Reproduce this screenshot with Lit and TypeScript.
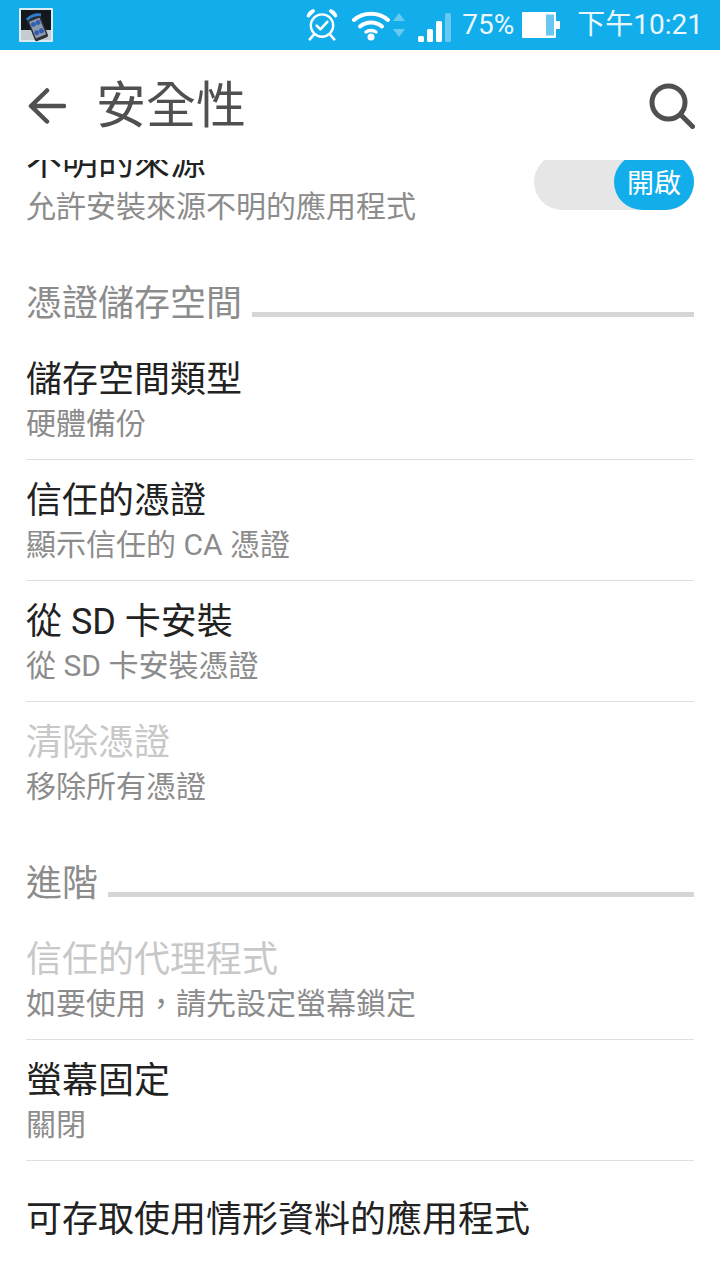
import { LitElement, html, css } from "lit";
import { customElement } from "lit/decorators.js";

type Row = { t: string; s?: string; dim?: boolean; last?: boolean };

@customElement("app-root")
export class AppRoot extends LitElement {
  static styles = css`
    :host {
      display: block;
      width: 720px;
      height: 1280px;
      overflow: hidden;
      background: #fff;
      font-family: Roboto, "Noto Sans CJK TC", sans-serif;
    }
    .status {
      height: 50px;
      background: #12aeeb;
      display: flex;
      align-items: center;
      color: #fff;
      padding: 0 17px 0 19px;
      box-sizing: border-box;
    }
    .status svg { display: block; flex: none; }
    .spacer { flex: 1; }
    .pct { font-size: 28px; margin: 0 8px 0 11px; line-height: 50px; color: #eaf8fe; }
    .time { font-size: 28px; margin-left: 17px; line-height: 50px; color: #eaf8fe; }
    .wifi { margin-left: 14px; }
    .arrows { margin-left: 3px; }
    .signal { margin-left: 13px; margin-top: 6px; }
    .bar {
      height: 110px;
      display: flex;
      align-items: center;
      padding: 0 25px 0 28px;
    }
    .bar svg { display: block; flex: none; margin-top: 2px; }
    .bar h1 {
      flex: 1;
      margin: 2px 0 0 30px;
      font-size: 50px;
      font-weight: 400;
      line-height: 60px;
      color: #505050;
    }
    .viewport { height: 1120px; overflow: hidden; padding: 0 26px; }
    .scroll { margin-top: -38px; }
    .row {
      padding: 18px 0 14px;
      border-bottom: 1px solid #e0e0e0;
      display: flex;
      align-items: flex-start;
    }
    .row.last { border-bottom: 0; padding-bottom: 15px; }
    .row.single { padding-top: 36px; }
    .body { flex: 1; }
    .t { font-size: 36px; line-height: 46px; color: #222; }
    .t.dim { color: #c8c8c8; }
    .s { font-size: 30px; line-height: 42px; color: #8c8c8c; }
    .section {
      display: flex;
      padding-top: 38px;
      padding-bottom: 12px;
      font-size: 36px;
      line-height: 46px;
      color: #8c8c8c;
      gap: 10px;
    }
    .rule { flex: 1; height: 5px; margin-top: 31px; background: #d6d6d6; }
    .toggle {
      width: 160px;
      height: 56px;
      margin-top: 14px;
      border-radius: 28px;
      background: #e6e6e6;
      display: flex;
      justify-content: flex-end;
    }
    .knob {
      width: 80px;
      height: 56px;
      border-radius: 28px;
      background: #12aeeb;
      color: #fff;
      font-size: 27px;
      line-height: 60px;
      text-align: center;
    }
  `;

  row(r: Row) {
    return html`<div class="row ${r.last ? "last" : ""} ${r.s ? "" : "single"}">
      <div class="body">
        <div class="t ${r.dim ? "dim" : ""}">${r.t}</div>
        ${r.s ? html`<div class="s">${r.s}</div>` : ""}
      </div>
    </div>`;
  }

  section(t: string) {
    return html`<div class="section"><span>${t}</span><div class="rule"></div></div>`;
  }

  appIcon() {
    return html`<svg width="34" height="34" viewBox="0 0 34 34">
      <rect width="34" height="34" rx="1" fill="#dcecf4"/>
      <rect x="2" y="2" width="30" height="20" fill="#14171c"/>
      <rect x="2" y="22" width="30" height="10" fill="#c4ccd2"/>
      <path d="M8 12C11 8 17 6 22 7" stroke="#2f7fd0" stroke-width="3" fill="none"/>
      <g transform="translate(-2 0) rotate(-22 21 21)">
        <rect x="14" y="9" width="14" height="23" rx="2" fill="#2c3038"/>
        <rect x="15.5" y="11" width="11" height="18" fill="#8d99ac"/>
        <circle cx="18.5" cy="15" r="2.4" fill="#2d5eb5"/>
        <circle cx="23.5" cy="15" r="2.4" fill="#2d5eb5"/>
        <circle cx="18.5" cy="24" r="2.4" fill="#2d5eb5"/>
        <circle cx="23.5" cy="24" r="2.4" fill="#2d5eb5"/>
      </g>
    </svg>`;
  }

  alarm() {
    return html`<svg width="32" height="32" viewBox="1 1 30 30" fill="none" stroke="#fff" stroke-linecap="round" stroke-linejoin="round">
      <circle cx="16" cy="16.5" r="10.5" stroke-width="2.2"/>
      <path d="M11 16.5l3.500 3.500 6.500-7" stroke-width="2.4"/>
      <path d="M2 7.500C3 4.500 5 2.500 8 1.500L9 3 3.500 8.500z" fill="#fff" stroke-width="1"/>
      <path d="M30 7.500C29 4.500 27 2.500 24 1.500L23 3l5.500 5.500z" fill="#fff" stroke-width="1"/>
      <path d="M8 25.500L4.500 29.500M24 25.500L27.500 29.500" stroke-width="2.400"/>
    </svg>`;
  }

  wifi() {
    return html`<svg class="wifi" width="38" height="32" viewBox="0 0 38 32" fill="none" stroke="#fff" stroke-width="4" stroke-linecap="round">
      <path d="M2 11C11 2.500 27 2.500 36 11"/>
      <path d="M8 17.500C14 12 24 12 30 17.500"/>
      <path d="M14 23C16.500 21 21.500 21 24 23" stroke-width="3.500"/>
      <circle cx="19" cy="28" r="3.500" fill="#fff" stroke="none"/>
    </svg>`;
  }

  arrows() {
    return html`<svg class="arrows" width="12" height="24" viewBox="0 0 12 24">
      <path d="M6 0l6 8H0z" fill="#69c8f1"/>
      <path d="M6 24l6-8H0z" fill="#69c8f1"/>
    </svg>`;
  }

  signal() {
    return html`<svg class="signal" width="33" height="30" viewBox="0 0 33 30">
      <rect x="0" y="23" width="6" height="6" rx="1.500" fill="#fff"/>
      <rect x="9" y="16" width="6" height="13" rx="1.500" fill="#fff"/>
      <rect x="18" y="8" width="6" height="21" rx="1.500" fill="#fff"/>
      <rect x="27" y="0" width="6" height="29" rx="1.500" fill="#69c8f1"/>
    </svg>`;
  }

  battery() {
    return html`<svg width="38" height="26" viewBox="0 0 38 26">
      <rect x="0" y="0" width="34" height="26" rx="1" fill="#fff"/>
      <rect x="24" y="2.500" width="8" height="21" fill="#69c8f1"/>
      <rect x="34" y="9" width="4" height="8" fill="#fff"/>
    </svg>`;
  }

  back() {
    return html`<svg width="38" height="36" viewBox="0 0 38 36" fill="none" stroke="#505050" stroke-width="4.500" stroke-linecap="round" stroke-linejoin="round">
      <path d="M36 18H4M19 2.500L3 18l16 15.500"/>
    </svg>`;
  }

  search() {
    return html`<svg width="46" height="46" viewBox="0 0 46 46" fill="none" stroke="#505050" stroke-linecap="round">
      <circle cx="19.500" cy="19.500" r="16.500" stroke-width="5"/>
      <path d="M32 32L43.500 43.500" stroke-width="5"/>
    </svg>`;
  }

  render() {
    return html`
      <div class="status">
        ${this.appIcon()}
        <div class="spacer"></div>
        ${this.alarm()}${this.wifi()}${this.arrows()}${this.signal()}
        <span class="pct">75%</span>
        ${this.battery()}
        <span class="time">下午10:21</span>
      </div>
      <div class="bar">
        ${this.back()}
        <h1>安全性</h1>
        ${this.search()}
      </div>
      <div class="viewport">
        <div class="scroll">
          <div class="row last">
            <div class="body">
              <div class="t">不明的來源</div>
              <div class="s">允許安裝來源不明的應用程式</div>
            </div>
            <div class="toggle"><div class="knob">開啟</div></div>
          </div>
          ${this.section("憑證儲存空間")}
          ${this.row({ t: "儲存空間類型", s: "硬體備份" })}
          ${this.row({ t: "信任的憑證", s: "顯示信任的 CA 憑證" })}
          ${this.row({ t: "從 SD 卡安裝", s: "從 SD 卡安裝憑證" })}
          ${this.row({ t: "清除憑證", s: "移除所有憑證", dim: true, last: true })}
          ${this.section("進階")}
          ${this.row({ t: "信任的代理程式", s: "如要使用\uFF0C請先設定螢幕鎖定", dim: true })}
          ${this.row({ t: "螢幕固定", s: "關閉" })}
          ${this.row({ t: "可存取使用情形資料的應用程式", last: true })}
        </div>
      </div>
    `;
  }
}
